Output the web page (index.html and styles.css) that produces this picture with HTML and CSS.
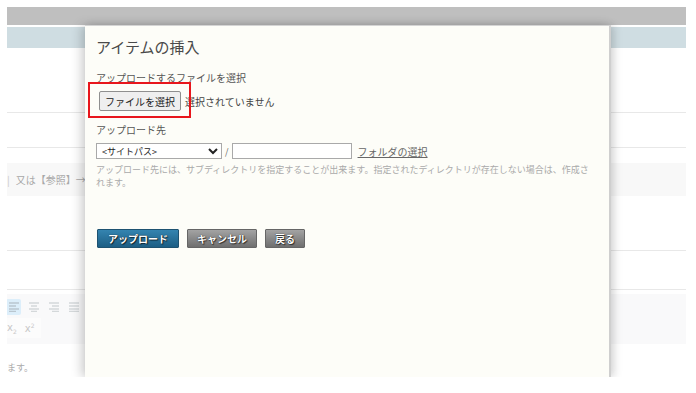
FILE: index.html
```html
<!DOCTYPE html>
<html lang="ja">
<head>
<meta charset="utf-8">
<link rel="stylesheet" href="styles.css">
</head>
<body>
<div class="frame">
  <div class="topbar"></div>
  <div class="page">
    <div class="hdr"></div>
    <div class="blank b1"></div>
    <div class="blank b2"></div>
    <div class="blank b3"></div>
    <div class="band band1"><span class="bar">|</span><span class="hint">又は【参照】→</span></div>
    <div class="blank b4"></div>
    <div class="blank b5"></div>
    <div class="band band2">
      <div class="aligns">
        <span class="al on"><svg width="12" height="10" viewBox="0 0 12 10"><path d="M1 1h10M1 4h7M1 7h10M1 9.5h7" stroke="#b9c6cf" stroke-width="1.4"/></svg></span>
        <span class="al"><svg width="12" height="10" viewBox="0 0 12 10"><path d="M1 1h10M3 4h6M1 7h10M3 9.5h6" stroke="#d4d8da" stroke-width="1.4"/></svg></span>
        <span class="al"><svg width="12" height="10" viewBox="0 0 12 10"><path d="M1 1h10M4 4h7M1 7h10M4 9.5h7" stroke="#d4d8da" stroke-width="1.4"/></svg></span>
        <span class="al"><svg width="12" height="10" viewBox="0 0 12 10"><path d="M1 1h10M1 4h10M1 7h10M1 9.5h10" stroke="#d4d8da" stroke-width="1.4"/></svg></span>
      </div>
      <div class="scripts"><span>x<sub>2</sub></span><span>x<sup>2</sup></span></div>
    </div>
    <div class="tail"><span>ます。</span></div>
  </div>

  <div class="dialog">
    <h1 class="title">アイテムの挿入</h1>
    <div class="label">アップロードするファイルを選択</div>
    <div class="filerow">
      <span class="filebtn">ファイルを選択</span>
      <span class="nofile">選択されていません</span>
      <span class="mark"></span>
    </div>
    <div class="label dest">アップロード先</div>
    <div class="destrow">
      <select class="sel"><option>&lt;サイトパス&gt;</option></select>
      <span class="slash">/</span>
      <input class="path" type="text">
      <a class="folder" href="#">フォルダの選択</a>
    </div>
    <p class="help">アップロード先には、サブディレクトリを指定することが出来ます。指定されたディレクトリが存在しない場合は、作成されます。</p>
    <div class="actions">
      <span class="btn blue">アップロード</span>
      <span class="btn gray">キャンセル</span>
      <span class="btn gray">戻る</span>
    </div>
  </div>
</div>
</body>
</html>
```
FILE: styles.css
```css
* { box-sizing: border-box; }
html, body { margin: 0; padding: 0; background: #fff; }
body {
  padding: 7px 10px 0 7px;
  font-family: "Noto Sans CJK JP", "Noto Sans", sans-serif;
  color: #555;
}
.frame {
  position: relative;
  width: 679px;
  height: 370px;
  overflow: hidden;
  background: #fff;
}
.topbar { height: 18px; background: #bfbfbf; }
.page { display: flex; flex-direction: column; }
.hdr { height: 21px; margin-top: 2px; background: #cfdde2; }
.blank { background: #fff; border-bottom: 1px solid #e8e8e8; }
.b1 { height: 65px; }
.b2 { height: 35px; }
.b3 { height: 15px; border-bottom: none; }
.band { background: #f8f8f8; }
.band1 {
  height: 33px;
  display: flex;
  align-items: center;
  font-size: 10px;
  color: #a8a8a8;
  gap: 6px;
}
.bar { color: #c8c8c8; }
.b4 { height: 55px; }
.b5 { height: 39px; }
.band2 {
  height: 50px;
  margin-top: 4px;
  background: #f9f9fa;
  padding-top: 5px;
}
.aligns { display: flex; gap: 5px; align-items: center; }
.al {
  width: 15px; height: 16px;
  display: flex; align-items: center; justify-content: center;
}
.al.on { background: #dceefa; border-radius: 2px; margin-left: -1px; }
.scripts {
  display: flex; gap: 8px;
  margin-top: 3px;
  width: 34px; height: 20px;
  background: #fcfcfc;
  font-family: "DejaVu Sans", sans-serif;
  font-size: 10px;
  color: #c8c8c8;
  padding-left: 0;
  align-items: center;
}
.scripts sub, .scripts sup { font-size: 6px; }
.tail {
  height: 34px;
  display: flex;
  align-items: flex-end;
  padding-bottom: 4px;
  font-size: 9px;
  color: #aaa;
}

.dialog {
  position: absolute;
  left: 78px;
  top: 18px;
  width: 526px;
  height: 352px;
  background: #fdfdf8;
  border-top: 1px solid #d4d4d4;
  border-right: 2px solid #cfcfcf;
  box-shadow: -4px 0 10px rgba(0,0,0,0.18), 4px 0 8px rgba(0,0,0,0.12);
  padding: 10px 8px 0 11px;
}
.title {
  margin: 0;
  font-size: 15px;
  line-height: 22px;
  font-weight: normal;
  color: #4a4a4a;
}
.label {
  margin-top: 13px;
  font-size: 10px;
  line-height: 14px;
  color: #555;
}
.filerow {
  position: relative;
  margin-top: 6px;
  display: flex;
  align-items: center;
  gap: 4px;
  height: 20px;
  margin-left: 3px;
}
.filebtn {
  height: 20px;
  width: 82px;
  display: flex; align-items: center; justify-content: center;
  font-size: 10px;
  color: #222;
  background: #efefef;
  border: 1px solid #8f8f8f;
  border-radius: 2px;
}
.nofile { font-size: 10px; color: #444; }
.mark {
  position: absolute;
  left: -11px;
  top: -9px;
  width: 103px;
  height: 36px;
  border: 2px solid #e8161c;
}
.label.dest { margin-top: 12px; }
.destrow {
  margin-top: 6px;
  display: flex;
  align-items: center;
  height: 16px;
}
.sel {
  width: 126px;
  height: 16px;
  font-size: 9px;
  font-family: "Noto Sans CJK JP", sans-serif;
  color: #222;
  border: 1px solid #a9a9a9;
  background: #fff;
  padding: 0 0 0 1px;
  margin: 0;
}
.slash { font-size: 9px; color: #666; margin: 0 3px 0 3px; }
.path {
  width: 120px;
  height: 16px;
  border: 1px solid #a9a9a9;
  background: #fff;
  margin: 0;
  padding: 0;
}
.folder {
  margin-left: 6px;
  font-size: 10px;
  color: #666;
  text-decoration: underline;
}
.help {
  margin: 4px 0 0;
  font-size: 9px;
  line-height: 13px;
  color: #aaa;
  width: 500px;
}
.actions {
  margin-top: 40px;
  display: flex;
  gap: 8px;
  margin-left: 1px;
}
.btn {
  height: 19px;
  padding: 0 9px;
  display: flex; align-items: center; justify-content: center;
  white-space: nowrap;
  font-size: 10px;
  font-weight: bold;
  color: #fff;
  text-shadow: 0 0 1px #000, 1px 1px 1px rgba(0,0,0,0.6);
  border-radius: 1px;
}
.btn.blue {
  background: linear-gradient(#3484b0, #1c5e84);
  border: 1px solid #1d5271;
  min-width: 82px;
}
.btn.gray {
  background: linear-gradient(#a3a3a3, #6f6f6f);
  border: 1px solid #666;
}
```
